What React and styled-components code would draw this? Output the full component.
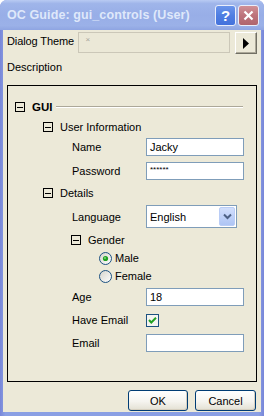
import React from 'react';
import styled, { createGlobalStyle } from 'styled-components';

const GlobalStyle = createGlobalStyle`
  html, body { margin: 0; padding: 0; background: #ffffff; }
  body {
    font-family: "Liberation Sans", Arial, sans-serif;
    font-size: 11px;
    color: #000;
  }
`;

const Window = styled.div`
  width: 264px;
  height: 416px;
  display: flex;
  flex-direction: column;
  background: linear-gradient(90deg, #7886d8 0%, #8a9fe4 2%, #8a9fe4 98%, #7886d8 100%);
  border-radius: 7px 7px 0 0;
  overflow: hidden;
`;

const TitleBar = styled.div`
  height: 30px;
  flex: none;
  display: flex;
  align-items: center;
  padding: 0 5px 0 7px;
  background: linear-gradient(180deg, #b9cbf3 0%, #9fb5ea 12%, #98aee7 50%, #9bb1e8 85%, #8fa5e2 100%);
`;

const Title = styled.div`
  flex: 1;
  color: #dfe8fa;
  font-weight: bold;
  font-size: 12.5px;
  letter-spacing: 0.1px;
  padding-bottom: 1px;
`;

const CaptionButton = styled.div`
  width: 21px;
  height: 21px;
  box-sizing: border-box;
  margin-left: 2px;
  border: 1px solid #e9eefb;
  border-radius: 3px;
  display: flex;
  align-items: center;
  justify-content: center;
  color: #fff;
  font-weight: bold;
  font-size: 15px;
  background: ${p => (p.$close
    ? 'linear-gradient(180deg, #d09096 0%, #bd737b 50%, #b0656d 100%)'
    : 'linear-gradient(180deg, #6a94ea 0%, #4f7ee2 50%, #4472dc 100%)')};
`;

const Body = styled.div`
  flex: 1;
  display: flex;
  flex-direction: column;
  margin: 0 3px 4px 3px;
  padding: 0 4px;
  background: #ece9d8;
`;

const ThemeRow = styled.div`
  display: flex;
  align-items: flex-start;
  margin-top: 2px;
  height: 22px;
`;

const ThemeLabel = styled.div`
  width: 72px;
  padding-top: 3px;
  line-height: 13px;
  letter-spacing: -0.1px;
`;

const DisabledField = styled.div`
  width: 153px;
  height: 21px;
  box-sizing: border-box;
  border: 1px solid #cbc7b8;
  background: #ebe8d7;
  color: #a7a69c;
  font-size: 8px;
  padding: 2px 0 0 6px;
`;

const ArrowButton = styled.div`
  width: 22px;
  height: 22px;
  box-sizing: border-box;
  margin-left: 5px;
  border: 1px solid;
  border-color: #fff #716f64 #716f64 #fff;
  box-shadow: inset -1px -1px 0 #aca899;
  display: flex;
  align-items: center;
  justify-content: center;
`;

const Caption = styled.div`
  height: 31px;
  box-sizing: border-box;
  padding-top: 7px;
  line-height: 13px;
`;

const GroupBox = styled.div`
  flex: 1;
  border: 1px solid #000;
  margin-bottom: 8px;
  padding: 11px 0 0 7px;
  display: flex;
  flex-direction: column;
`;

const Row = styled.div`
  display: flex;
  align-items: center;
  height: ${p => p.$h || 20}px;
  margin-top: ${p => p.$mt || 0}px;
  padding-left: ${p => p.$indent || 0}px;
`;

const ToggleBox = styled.div`
  width: 10px;
  height: 10px;
  box-sizing: border-box;
  border: 1px solid #000;
  position: relative;
  margin-right: 7px;
  flex: none;
  &::after {
    content: '';
    position: absolute;
    left: 1px;
    right: 1px;
    top: 3.5px;
    height: 1px;
    background: #000;
  }
`;

const GroupTitle = styled.span`
  font-weight: bold;
  font-size: 11.5px;
`;

const Rule = styled.div`
  flex: 1;
  margin: 0 13px 0 4px;
  border-top: 1px solid #aca899;
  border-bottom: 1px solid #fff;
`;

const FieldLabel = styled.div`
  width: 74px;
`;

const TextBox = styled.div`
  width: 98px;
  height: 18px;
  box-sizing: border-box;
  border: 1px solid #7f9db9;
  background: #fff;
  padding-left: 3px;
  display: flex;
  align-items: ${p => (p.$secret ? 'flex-start' : 'center')};
  font-size: ${p => (p.$secret ? '8px' : '11px')};
  padding-top: ${p => (p.$secret ? '2px' : '0')};
`;

const Select = styled.div`
  width: 91px;
  height: 23px;
  box-sizing: border-box;
  border: 1px solid #7f9db9;
  background: #fff;
  display: flex;
  align-items: center;
  padding: 0 1px 0 3px;
`;

const SelectText = styled.div`
  flex: 1;
`;

const DropButton = styled.div`
  width: 16px;
  height: 19px;
  box-sizing: border-box;
  border: 1px solid #bacdf6;
  border-radius: 2px;
  background: linear-gradient(180deg, #d2dffc 0%, #bccff8 60%, #aec5f4 100%);
  display: flex;
  align-items: center;
  justify-content: center;
`;

const Choice = styled.div`
  display: flex;
  align-items: center;
  gap: 3px;
`;

const Footer = styled.div`
  display: flex;
  justify-content: flex-end;
  gap: 7px;
  padding-right: 1px;
  margin-bottom: 1px;
`;

const Button = styled.div`
  width: ${p => p.$w}px;
  height: 21px;
  box-sizing: border-box;
  border: 1px solid #003c74;
  border-radius: 3px;
  background: linear-gradient(180deg, #ffffff 0%, #f5f4ef 55%, #e3e0d3 100%);
  box-shadow: inset -1px -1px 0 #d6d0c0;
  display: flex;
  align-items: center;
  justify-content: center;
  font-size: 11px;
`;

const Radio = ({ checked }) => (
  <svg width="13" height="13" viewBox="0 0 13 13">
    <defs>
      <linearGradient id="rg" x1="0" y1="0" x2="1" y2="1">
        <stop offset="0" stopColor="#d4d3cb" />
        <stop offset="1" stopColor="#ffffff" />
      </linearGradient>
    </defs>
    <circle cx="6.5" cy="6.5" r="6" fill="url(#rg)" stroke="#1c5180" strokeWidth="1" />
    {checked && <circle cx="6.5" cy="6.5" r="2.6" fill="#21a121" />}
    {checked && <circle cx="6" cy="6" r="1" fill="#7fd47f" />}
  </svg>
);

const Checkbox = () => (
  <svg width="13" height="13" viewBox="0 0 13 13">
    <rect x="0.5" y="0.5" width="12" height="12" fill="#f4f4f0" stroke="#1c5180" />
    <path d="M3 6 L5.3 8.5 L10 3.8" fill="none" stroke="#21a121" strokeWidth="2" />
  </svg>
);

export default function App() {
  return (
    <>
      <GlobalStyle />
      <Window>
        <TitleBar>
          <Title>OC Guide: gui_controls (User)</Title>
          <CaptionButton>?</CaptionButton>
          <CaptionButton $close>
            <svg width="11" height="11" viewBox="0 0 11 11">
              <path d="M1.5 1.5 L9.5 9.5 M9.5 1.5 L1.5 9.5" stroke="#fff" strokeWidth="2.2" />
            </svg>
          </CaptionButton>
        </TitleBar>
        <Body>
          <ThemeRow>
            <ThemeLabel>Dialog Theme</ThemeLabel>
            <DisabledField>×</DisabledField>
            <ArrowButton>
              <svg width="7" height="11" viewBox="0 0 7 11">
                <polygon points="0,0 6,5.5 0,11" fill="#000" />
              </svg>
            </ArrowButton>
          </ThemeRow>
          <Caption>Description</Caption>
          <GroupBox>
            <Row>
              <ToggleBox />
              <GroupTitle>GUI</GroupTitle>
              <Rule />
            </Row>
            <Row $indent={28}>
              <ToggleBox />
              User Information
            </Row>
            <Row $indent={57}>
              <FieldLabel>Name</FieldLabel>
              <TextBox>Jacky</TextBox>
            </Row>
            <Row $indent={57} $mt={4}>
              <FieldLabel>Password</FieldLabel>
              <TextBox $secret>******</TextBox>
            </Row>
            <Row $indent={28} $mt={2}>
              <ToggleBox />
              Details
            </Row>
            <Row $indent={57} $mt={2} $h={23}>
              <FieldLabel>Language</FieldLabel>
              <Select>
                <SelectText>English</SelectText>
                <DropButton>
                  <svg width="9" height="7" viewBox="0 0 9 7">
                    <path d="M1 1.5 L4.5 5 L8 1.5" fill="none" stroke="#4d6185" strokeWidth="2" />
                  </svg>
                </DropButton>
              </Select>
            </Row>
            <Row $indent={56} $mt={2}>
              <ToggleBox />
              Gender
            </Row>
            <Row $indent={84} $h={16}>
              <Choice><Radio checked />Male</Choice>
            </Row>
            <Row $indent={84} $h={16} $mt={2}>
              <Choice><Radio />Female</Choice>
            </Row>
            <Row $indent={57} $mt={3}>
              <FieldLabel>Age</FieldLabel>
              <TextBox>18</TextBox>
            </Row>
            <Row $indent={57} $mt={3}>
              <FieldLabel>Have Email</FieldLabel>
              <Checkbox />
            </Row>
            <Row $indent={57} $mt={3}>
              <FieldLabel>Email</FieldLabel>
              <TextBox />
            </Row>
          </GroupBox>
          <Footer>
            <Button $w={60}>OK</Button>
            <Button $w={61}>Cancel</Button>
          </Footer>
        </Body>
      </Window>
    </>
  );
}
